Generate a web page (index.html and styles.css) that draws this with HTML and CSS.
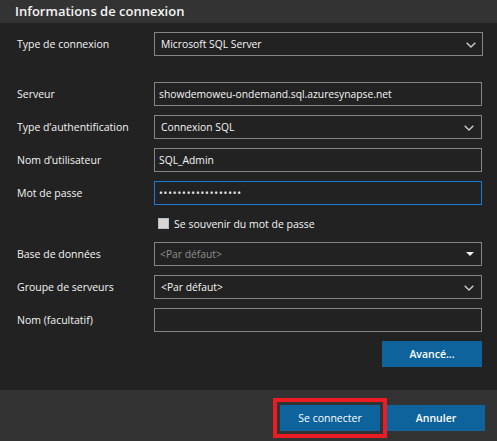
FILE: index.html
```html
<!DOCTYPE html>
<html lang="fr">
<head>
<meta charset="utf-8">
<title>Informations de connexion</title>
<link rel="stylesheet" href="styles.css">
</head>
<body>
<div class="dialog">
  <div class="header"><h1 class="title">Informations de connexion</h1></div>
  <div class="content">
    <div class="row first">
      <span class="label">Type de connexion</span>
      <div class="field select wide"><span class="value sel">Microsoft SQL Server</span>
        <svg class="chev" width="10" height="6" viewBox="0 0 10 6"><path d="M0.7 0.7 L5 5 L9.3 0.7" fill="none" stroke="#d0d0d0" stroke-width="1.3"/></svg>
      </div>
    </div>
    <div class="row">
      <span class="label">Serveur</span>
      <div class="field"><span class="value">showdemoweu-ondemand.sql.azuresynapse.net</span></div>
    </div>
    <div class="row">
      <span class="label">Type d’authentification</span>
      <div class="field select"><span class="value sel">Connexion SQL</span>
        <svg class="chev" width="10" height="6" viewBox="0 0 10 6"><path d="M0.7 0.7 L5 5 L9.3 0.7" fill="none" stroke="#d0d0d0" stroke-width="1.3"/></svg>
      </div>
    </div>
    <div class="row">
      <span class="label">Nom d’utilisateur</span>
      <div class="field"><span class="value">SQL_Admin</span></div>
    </div>
    <div class="row">
      <span class="label">Mot de passe</span>
      <div class="field focus"><span class="value dots">••••••••••••••••••</span></div>
    </div>
    <div class="check-row">
      <span class="checkbox"></span><span class="check-label">Se souvenir du mot de passe</span>
    </div>
    <div class="row">
      <span class="label">Base de données</span>
      <div class="field select"><span class="value placeholder">&lt;Par défaut&gt;</span>
        <svg class="caret" width="8" height="4" viewBox="0 0 8 4"><path d="M0 0 H8 L4 4 Z" fill="#f0f0f0"/></svg>
      </div>
    </div>
    <div class="row">
      <span class="label">Groupe de serveurs</span>
      <div class="field select"><span class="value sel">&lt;Par défaut&gt;</span>
        <svg class="chev" width="10" height="6" viewBox="0 0 10 6"><path d="M0.7 0.7 L5 5 L9.3 0.7" fill="none" stroke="#d0d0d0" stroke-width="1.3"/></svg>
      </div>
    </div>
    <div class="row">
      <span class="label">Nom (facultatif)</span>
      <div class="field"></div>
    </div>
    <div class="actions">
      <button class="btn advanced">Avancé...</button>
    </div>
  </div>
  <div class="footer">
    <button class="btn connect">Se connecter</button>
    <button class="btn cancel">Annuler</button>
  </div>
</div>
</body>
</html>
```

FILE: styles.css
```css
* { box-sizing: border-box; }
html, body { margin: 0; padding: 0; }
body {
  background: #222222;
  font-family: "Open Sans", "Noto Sans", sans-serif;
  color: #f2f2f2;
  width: 497px;
  height: 441px;
  overflow: hidden;
}
.dialog { display: flex; flex-direction: column; height: 441px; }
.header {
  height: 23px;
  background: #333333;
  padding-left: 15px;
  display: flex;
  align-items: center;
}
.title {
  margin: 0;
  font-size: 13px;
  font-weight: 600;
  color: #f4f4f4;
  line-height: 23px;
}
.content {
  height: 367px;
  padding: 9px 15px 0 17px;
  display: flex;
  flex-direction: column;
  gap: 9px;
}
.row { display: flex; align-items: center; height: 24px; }
.row.first { margin-bottom: 17px; }
.label { width: 137px; flex: none; font-size: 10.5px; color: #f4f4f4; }
.field {
  flex: 1;
  height: 24px;
  border: 1px solid #858585;
  display: flex;
  align-items: center;
  padding-left: 4px;
  padding-right: 7px;
  position: relative;
}
.field.wide { margin-right: -1px; padding-right: 6px; }
.field.focus { border-color: #1a7ad4; }
.value { flex: 1; font-size: 10.3px; color: #f6f6f6; white-space: nowrap; }
.value.sel { padding-left: 2px; }
.value.placeholder { color: #8e8e8e; padding-left: 1px; }
.value.dots { font-size: 10px; letter-spacing: 0.85px; color: #ececec; }
.chev { flex: none; margin-top: 2px; }
.caret { flex: none; margin-right: 0px; }
.check-row {
  height: 19px;
  display: flex;
  align-items: center;
  padding-left: 141px;
}
.checkbox {
  width: 11px;
  height: 11px;
  background: #d6d6d6;
  border: 1px solid #bdbdbd;
  margin-right: 5px;
}
.check-label { font-size: 10.5px; color: #f4f4f4; }
.actions { display: flex; justify-content: flex-end; }
.btn {
  font-family: inherit;
  font-size: 10.5px;
  color: #ffffff;
  background: #0e639c;
  border: none;
  height: 26px;
  padding: 0;
  cursor: pointer;
}
.advanced { width: 100px; font-weight: 600; }
.footer {
  height: 51px;
  background: #333333;
  display: flex;
  justify-content: flex-end;
  align-items: flex-start;
  padding: 15px 12px 0 0;
  gap: 7px;
}
.connect { width: 100px; outline: 4px solid #ec1c24; outline-offset: 3px; }
.cancel { width: 98px; font-weight: 600; }
```
